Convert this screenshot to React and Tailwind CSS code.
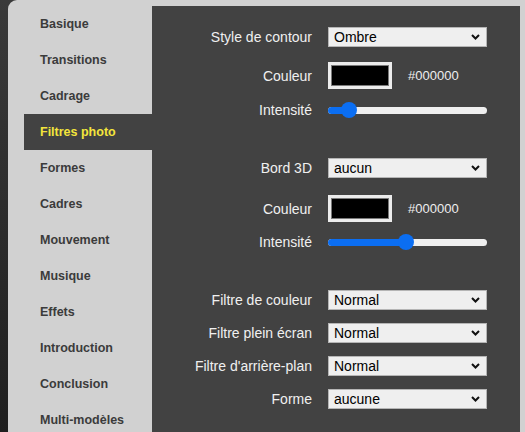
const menu = [
  'Basique',
  'Transitions',
  'Cadrage',
  'Filtres photo',
  'Formes',
  'Cadres',
  'Mouvement',
  'Musique',
  'Effets',
  'Introduction',
  'Conclusion',
  'Multi-modèles',
];

function Chevron() {
  return (
    <svg width="9" height="6" viewBox="0 0 9 6" className="absolute right-[6px] top-1/2 -translate-y-1/2">
      <polyline points="1,1 4.5,4.5 8,1" fill="none" stroke="#111" strokeWidth="2" />
    </svg>
  );
}

function Select({ value }) {
  return (
    <div className="relative w-[159px] h-[20px] bg-[#efefef] border border-[#b5b5b5] flex items-center pl-[5px] text-[14px] text-black">
      {value}
      <Chevron />
    </div>
  );
}

function Swatch() {
  return (
    <div className="flex items-center">
      <div className="w-[64px] h-[27px] bg-[#ececec] p-[3px]">
        <div className="w-full h-full bg-black border border-[#7a7a7a]" />
      </div>
      <span className="ml-4 text-[13px] text-[#eeeeee]">#000000</span>
    </div>
  );
}

function Slider({ value }) {
  return (
    <div className="relative w-[159px] h-[16px] flex items-center">
      <div className="w-full h-[7px] rounded-full bg-[#efefef] overflow-hidden">
        <div className="h-full bg-[#0b6ef2]" style={{ width: `${value}%` }} />
      </div>
      <div
        className="absolute top-0 w-[16px] h-[16px] rounded-full bg-[#0b6ef2] -translate-x-1/2"
        style={{ left: `${value}%` }}
      />
    </div>
  );
}

function Row({ label, className = '', children }) {
  return (
    <div className={`flex items-center shrink-0 ${className}`}>
      <div className="w-[160px] text-right text-[14px] text-[#f0f0f0] leading-none">{label}</div>
      <div className="ml-4">{children}</div>
    </div>
  );
}

export default function App() {
  return (
    <div
      className="w-[525px] h-[432px] overflow-hidden flex bg-gradient-to-b from-[#3a3a3a] to-[#1f1f1f]"
      style={{ fontFamily: '"Liberation Sans", Arial, sans-serif' }}
    >
      <div className="ml-2 flex-1 bg-[#d1d1d1] rounded-tl-[9px] flex pt-[6px]">
        {/* Sidebar */}
        <nav className="w-[144px] flex flex-col">
          {menu.map((item) => (
            <div
              key={item}
              className={`ml-4 h-[36px] shrink-0 pl-4 flex items-center text-[12.5px] font-bold ${
                item === 'Filtres photo' ? 'bg-[#424242] text-[#f4e53c]' : 'text-[#3b3b3b]'
              }`}
            >
              {item}
            </div>
          ))}
        </nav>

        {/* Content */}
        <main className="w-[368px] bg-[#424242] flex flex-col pt-[21px]">
          <Row label="Style de contour">
            <Select value="Ombre" />
          </Row>
          <Row label="Couleur" className="mt-[15px]">
            <Swatch />
          </Row>
          <Row label="Intensité" className="mt-[13px]">
            <Slider value={13} />
          </Row>

          <Row label="Bord 3D" className="mt-[40px]">
            <Select value="aucun" />
          </Row>
          <Row label="Couleur" className="mt-[17px]">
            <Swatch />
          </Row>
          <Row label="Intensité" className="mt-[12px]">
            <Slider value={49} />
          </Row>

          <Row label="Filtre de couleur" className="mt-[40px]">
            <Select value="Normal" />
          </Row>
          <Row label="Filtre plein écran" className="mt-[13px]">
            <Select value="Normal" />
          </Row>
          <Row label="Filtre d'arrière-plan" className="mt-[13px]">
            <Select value="Normal" />
          </Row>
          <Row label="Forme" className="mt-[13px]">
            <Select value="aucune" />
          </Row>
        </main>
      </div>
    </div>
  );
}
